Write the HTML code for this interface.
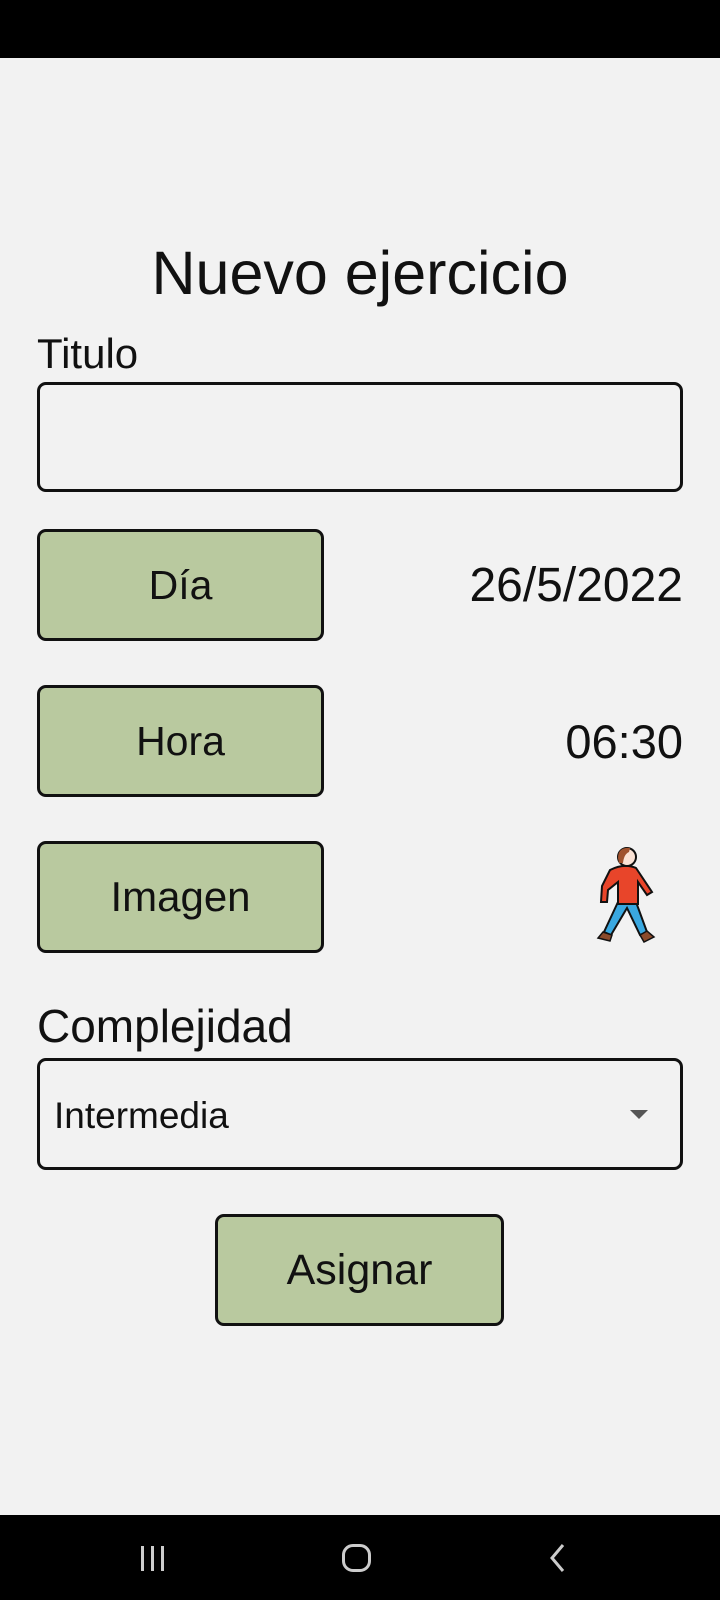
<!DOCTYPE html>
<html><head><meta charset="utf-8"><style>
*{margin:0;padding:0;box-sizing:border-box}
body{width:720px;height:1600px;background:#f2f2f2;position:relative;font-family:"Liberation Sans",Roboto,sans-serif;color:#111;overflow:hidden}
.abs{position:absolute;line-height:1}
.btn{position:absolute;left:37px;width:287px;height:112px;background:#b9c99f;border:3px solid #111;border-radius:9px;display:flex;align-items:center;justify-content:center;font-size:41px}
.box{position:absolute;left:37px;width:646px;border:3px solid #111;border-radius:9px}
.val{position:absolute;right:37px;text-align:right;line-height:1}
</style></head><body>
<div class="abs" style="left:0;top:0;width:720px;height:58px;background:#000"></div>
<div class="abs" style="left:0;top:243px;width:720px;text-align:center;font-size:61px">Nuevo ejercicio</div>
<div class="abs" style="left:37px;top:333px;font-size:42px">Titulo</div>
<div class="box" style="top:382px;height:110px"></div>
<div class="btn" style="top:529px">Día</div>
<div class="val" style="top:562px;font-size:48px">26/5/2022</div>
<div class="btn" style="top:685px">Hora</div>
<div class="val" style="top:718px;font-size:47px">06:30</div>
<div class="btn" style="top:841px;font-size:42px">Imagen</div>
<svg class="abs" style="left:594px;top:846px" width="70" height="100" viewBox="0 0 70 100">
<path d="M24 56 L10 86 L17 89 L33 62 L46 89 L53 86 L42 56Z" fill="#3aa8e0" stroke="#111" stroke-width="2"/>
<path d="M16 24 Q30 17 42 22 L58 46 L53 49 L44 36 L44 58 L24 58 L24 36 L14 44 L13 56 L7 56 L8 40Z" fill="#e8452a" stroke="#111" stroke-width="2"/>
<circle cx="33" cy="11" r="9" fill="#fbe3d6" stroke="#111" stroke-width="2"/>
<path d="M24 12 Q24 1 36 2 L35 6 Q30 8 29 17 L25 17Z" fill="#a0522d"/>
<path d="M9 86 L18 89 L16 95 L4 92Z M46 89 L53 85 L60 91 L50 96Z" fill="#8b4a2b" stroke="#111" stroke-width="1.5"/>
</svg>
<div class="abs" style="left:37px;top:1003px;font-size:46px">Complejidad</div>
<div class="box" style="top:1058px;height:112px"></div>
<div class="abs" style="left:54px;top:1097px;font-size:37px">Intermedia</div>
<div class="abs" style="left:630px;top:1110px;width:0;height:0;border-left:9px solid transparent;border-right:9px solid transparent;border-top:9px solid #555"></div>
<div class="btn" style="left:215px;top:1214px;width:289px;font-size:43px">Asignar</div>
<div class="abs" style="left:0;top:1515px;width:720px;height:85px;background:#000"></div>
<div class="abs" style="left:141px;top:1546px;width:3px;height:25px;background:#ccc;box-shadow:10px 0 #ccc,20px 0 #ccc"></div>
<div class="abs" style="left:342px;top:1544px;width:29px;height:28px;border:3px solid #ccc;border-radius:11px"></div>
<svg class="abs" style="left:548px;top:1543px" width="20" height="30"><path d="M15 2 L4 15 L15 28" stroke="#ccc" stroke-width="3" fill="none"/></svg>
</body></html>
